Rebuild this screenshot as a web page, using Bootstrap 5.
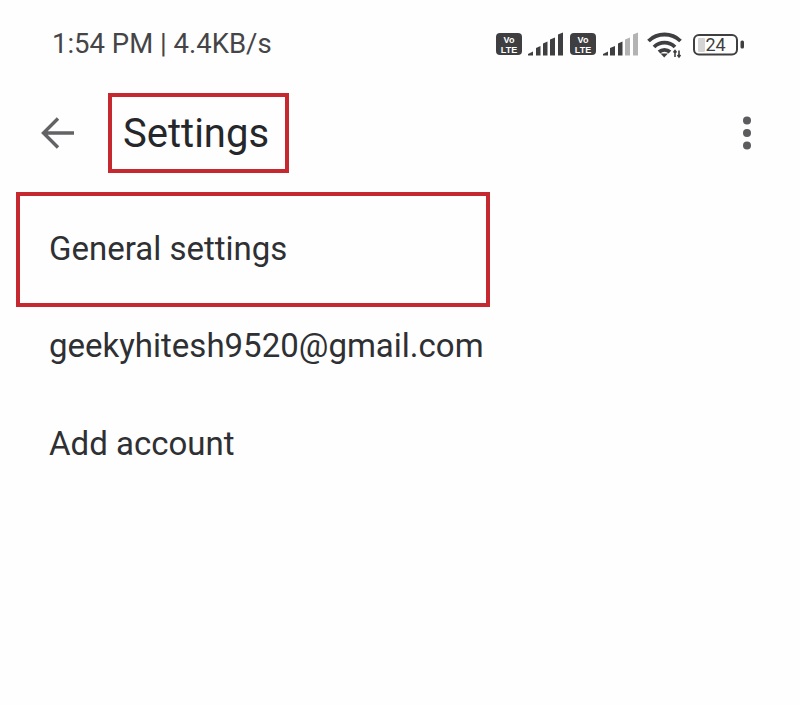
<!DOCTYPE html>
<html lang="en">
<head>
    <meta charset="UTF-8">
    <meta name="viewport" content="width=device-width, initial-scale=1.0">
    <title>Settings</title>
    <link href="https://cdn.jsdelivr.net/npm/bootstrap@5.3.0/dist/css/bootstrap.min.css" rel="stylesheet">
    <style>
        body { background: #fefefe; color: #2b2c2e; font-family: Roboto, "Liberation Sans", sans-serif; }
        .phone-screen { width: 800px; height: 705px; overflow: hidden; }
        .status-row { height: 93px; padding: 27px 54px 0 52px; }
        .status-text { font-size: 27.5px; line-height: 34px; color: #454547; }
        .status-icons { height: 34px; }
        .app-bar { height: 80px; padding-right: 48px; }
        .back-btn { width: 108px; padding-left: 40px; }
        .boxed { border: 4px solid #c5282f; }
        .title-box { width: 181px; height: 80px; padding-left: 11px; padding-top: 1px; }
        .page-title { font-size: 40px; line-height: 1; color: #26272a; font-weight: 400; margin: 0; }
        .menu-list { margin-top: 19px; }
        .menu-text { font-size: 33px; line-height: 1; color: #2f3033; }
        .general-box { width: 474px; height: 115px; margin-left: 16px; padding-left: 29px; padding-bottom: 2px; }
        .menu-row { height: 78px; padding-left: 49px; }
        .menu-row + .menu-row { margin-top: 19px; }
        .email-row { padding-bottom: 2px; }
    </style>
</head>
<body>
    <div class="phone-screen">
        <div class="status-row d-flex justify-content-between align-items-start">
            <div class="status-text">1:54 PM | 4.4KB/s</div>
            <svg class="status-icons" width="250" height="34" viewBox="0 0 250 34">
                <rect x="0" y="6" width="26" height="22" rx="4" fill="#3f3f41"/>
                <text x="13" y="15.5" font-family="Liberation Sans" font-weight="700" font-size="9" fill="#fff" text-anchor="middle">Vo</text>
                <text x="13" y="25.5" font-family="Liberation Sans" font-weight="700" font-size="9" fill="#fff" text-anchor="middle">LTE</text>
                <g fill="#3f3f41">
                    <path d="M32 27 L37 24.5 V28.5 H32 Z"/>
                    <path d="M40 21 L44.5 19 V28.5 H40 Z"/>
                    <path d="M47 16.5 L51.5 14.5 V28.5 H47 Z"/>
                    <path d="M54 12.5 L59 10.5 V28.5 H54 Z"/>
                    <path d="M62 7.5 L67 5.5 V28.5 H62 Z"/>
                </g>
                <rect x="74" y="6" width="26" height="22" rx="4" fill="#3f3f41"/>
                <text x="87" y="15.5" font-family="Liberation Sans" font-weight="700" font-size="9" fill="#fff" text-anchor="middle">Vo</text>
                <text x="87" y="25.5" font-family="Liberation Sans" font-weight="700" font-size="9" fill="#fff" text-anchor="middle">LTE</text>
                <g fill="#3f3f41">
                    <path d="M107 27 L112 24.5 V28.5 H107 Z"/>
                    <path d="M114 21 L119 19 V28.5 H114 Z"/>
                    <path d="M122 16.5 L126.5 14.5 V28.5 H122 Z"/>
                </g>
                <g fill="#b3b3b4">
                    <path d="M129 12.5 L134 10.5 V28.5 H129 Z"/>
                    <path d="M137 7.5 L142 5.5 V28.5 H137 Z"/>
                </g>
                <g fill="none" stroke="#3f3f41" stroke-width="3.8">
                    <path d="M152.5 14 A23 23 0 0 1 184.5 14"/>
                    <path d="M158 20 A15 15 0 0 1 179 20"/>
                    <path d="M163 25 A8 8 0 0 1 174 25"/>
                </g>
                <path d="M164.5 26.5 H172 L168.2 30.5 Z" fill="#3f3f41"/>
                <path d="M179 30 V23.5 M177.5 25.5 L179 23.5 L180.5 25.5 M183 23.5 V30 M181.5 28 L183 30 L184.5 28" fill="none" stroke="#3f3f41" stroke-width="1.6"/>
                <rect x="198" y="8" width="43" height="19.5" rx="5" fill="none" stroke="#3f3f41" stroke-width="2"/>
                <rect x="202" y="11" width="7" height="14" rx="1" fill="#d4d4d5"/>
                <text x="219.5" y="23.5" font-family="Roboto" font-size="18" fill="#3f3f41" text-anchor="middle">24</text>
                <rect x="244.5" y="13.5" width="3.5" height="8" rx="1.5" fill="#3f3f41"/>
            </svg>
        </div>
        <div class="app-bar d-flex align-items-center justify-content-between">
            <div class="d-flex align-items-center">
                <div class="back-btn d-flex align-items-center">
                    <svg width="36" height="34" viewBox="0 0 36 34">
                        <path d="M34 17 H4 M18 2.5 L3.5 17 L18 31.5" fill="none" stroke="#636365" stroke-width="3.4"/>
                    </svg>
                </div>
                <div class="title-box boxed d-flex align-items-center">
                    <h1 class="page-title">Settings</h1>
                </div>
            </div>
            <svg width="10" height="34" viewBox="0 0 10 34">
                <circle cx="5" cy="4.5" r="4" fill="#5c5c5e"/>
                <circle cx="5" cy="17" r="4" fill="#5c5c5e"/>
                <circle cx="5" cy="29.5" r="4" fill="#5c5c5e"/>
            </svg>
        </div>
        <div class="menu-list">
            <div class="general-box boxed menu-text d-flex align-items-center">General settings</div>
            <div class="menu-row email-row menu-text d-flex align-items-center">geekyhitesh9520@gmail.com</div>
            <div class="menu-row menu-text d-flex align-items-center">Add account</div>
        </div>
    </div>
    <script src="https://cdn.jsdelivr.net/npm/bootstrap@5.3.0/dist/js/bootstrap.bundle.min.js"></script>
</body>
</html>
